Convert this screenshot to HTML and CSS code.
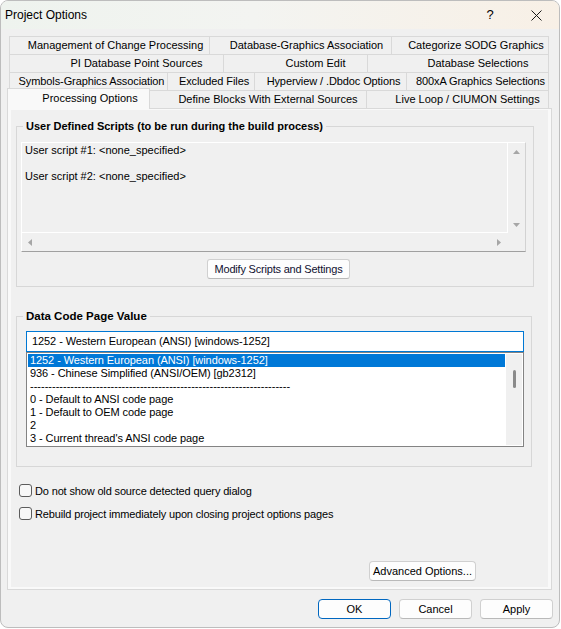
FILE: index.html
```html
<!DOCTYPE html>
<html>
<head>
<meta charset="utf-8">
<title>Project Options</title>
<link rel="stylesheet" href="styles.css">
</head>
<body>
<div class="window">
  <div class="titlebar">
    <span class="title">Project Options</span>
    <span class="cap-btn cap-help">?</span>
    <span class="cap-btn cap-close"><svg width="11" height="11" viewBox="0 0 11 11"><path d="M0.5 0.5L10.5 10.5M10.5 0.5L0.5 10.5" stroke="#1a1a1a" stroke-width="1" fill="none"/></svg></span>
  </div>
  <div class="client">
    <div class="tabs">
      <div class="tabrow row1">
        <div class="tab">Management of Change Processing</div>
        <div class="tab">Database-Graphics Association</div>
        <div class="tab">Categorize SODG Graphics</div>
      </div>
      <div class="tabrow row2">
        <div class="tab">PI Database Point Sources</div>
        <div class="tab">Custom Edit</div>
        <div class="tab">Database Selections</div>
      </div>
      <div class="tabrow row3">
        <div class="tab">Symbols-Graphics Association</div>
        <div class="tab">Excluded Files</div>
        <div class="tab">Hyperview / .Dbdoc Options</div>
        <div class="tab">800xA Graphics Selections</div>
      </div>
      <div class="tabrow row4">
        <div class="tab active">Processing Options</div>
        <div class="tab">Define Blocks With External Sources</div>
        <div class="tab">Live Loop / CIUMON Settings</div>
      </div>
    </div>
    <div class="panel">
      <div class="page">
        <fieldset class="group g1">
          <legend class="legend-tahoma">User Defined Scripts (to be run during the build process)</legend>
          <div class="scriptbox">
            <div class="script-text">
              <div class="line">User script #1: &lt;none_specified&gt;</div>
              <div class="line">&nbsp;</div>
              <div class="line">User script #2: &lt;none_specified&gt;</div>
            </div>
            <div class="vscroll">
              <svg width="7" height="4" viewBox="0 0 7 4"><polygon points="0,4 3.5,0 7,4" fill="#a6a6a6"/></svg>
              <svg width="7" height="4" viewBox="0 0 7 4"><polygon points="0,0 7,0 3.5,4" fill="#a6a6a6"/></svg>
            </div>
            <div class="hscroll">
              <svg width="4" height="7" viewBox="0 0 4 7"><polygon points="4,0 4,7 0,3.5" fill="#a6a6a6"/></svg>
              <svg width="4" height="7" viewBox="0 0 4 7"><polygon points="0,0 4,3.5 0,7" fill="#a6a6a6"/></svg>
            </div>
            <div class="corner"></div>
          </div>
          <button class="btn btn-modify">Modify Scripts and Settings</button>
        </fieldset>

        <fieldset class="group g2">
          <legend class="legend-segoe">Data Code Page Value</legend>
          <div class="combo">1252 - Western European (ANSI) [windows-1252]</div>
          <div class="list">
            <div class="items">
              <div class="item sel">1252 - Western European (ANSI) [windows-1252]</div>
              <div class="item">936 - Chinese Simplified (ANSI/OEM) [gb2312]</div>
              <div class="item dashes">-----------------------------------------------------------------------</div>
              <div class="item">0 - Default to ANSI code page</div>
              <div class="item">1 - Default to OEM code page</div>
              <div class="item">2</div>
              <div class="item">3 - Current thread's ANSI code page</div>
            </div>
            <div class="lscroll"><div class="thumb"></div></div>
          </div>
        </fieldset>

        <label class="checkrow first"><span class="check"></span><span class="checktext">Do not show old source detected query dialog</span></label>
        <label class="checkrow second"><span class="check"></span><span class="checktext">Rebuild project immediately upon closing project options pages</span></label>

        <button class="btn btn-advanced">Advanced Options...</button>
      </div>
    </div>
    <div class="footer">
      <button class="btn btn-foot btn-default">OK</button>
      <button class="btn btn-foot">Cancel</button>
      <button class="btn btn-foot">Apply</button>
    </div>
  </div>
</div>
</body>
</html>
```

FILE: styles.css
```css
* { box-sizing: border-box; }
html, body { margin: 0; padding: 0; background: #ffffff; }
body {
  width: 561px;
  height: 629px;
  overflow: hidden;
  font-family: "Liberation Sans", Arial, sans-serif;
  font-size: 11px;
  color: #000;
}
.window {
  width: 560px;
  height: 628px;
  border: 1px solid #bdbdbd;
  border-radius: 8px;
  background: #f0f0f0;
  overflow: hidden;
  display: flex;
  flex-direction: column;
}
.titlebar {
  height: 28px;
  flex: none;
  display: flex;
  align-items: center;
  background: linear-gradient(90deg, #eef3ee 0%, #f3f4f1 45%, #f8f0e6 100%);
}
.title {
  flex: 1;
  font-size: 12px;
  padding-left: 4px;
  padding-bottom: 1px;
}
.cap-btn {
  width: 46px;
  height: 28px;
  display: flex;
  align-items: center;
  justify-content: center;
}
.cap-help { font-size: 13px; padding-bottom: 1px; }

.client {
  flex: 1;
  display: flex;
  flex-direction: column;
  padding: 7px 7px 0 6px;
}

/* tabs */
.tabs { margin: 0 3px 0 2px; }
.tabrow { display: grid; height: 18px; }
.row1 { grid-template-columns: 201px 182px 157px; }
.row2 { grid-template-columns: 215px 144px 181px; }
.row3 { grid-template-columns: 159px 87px 152px 142px; }
.row4 { grid-template-columns: 141px 217px 182px; }
.tab {
  border-top: 1px solid #d9d9d9;
  border-right: 1px solid #d9d9d9;
  background: #f0f0f0;
  line-height: 17px;
  text-align: center;
  white-space: nowrap;
  overflow: hidden;
}
.tab:first-child { border-left: 1px solid #d9d9d9; }
.row1 .tab { padding-left: 12px; }
.row2 .tab { padding-left: 40px; }
.row3 .tab { padding-left: 6px; letter-spacing: -0.1px; }
.row4 .tab { padding-left: 20px; }
.row4 .tab.active {
  margin: -2px 0 -1px -2px;
  background: #f9f9f9;
  position: relative;
  z-index: 1;
  line-height: 18px;
  padding-left: 23px;
}

/* panel */
.panel {
  border: 1px solid #d9d9d9;
  background: #f9f9f9;
  padding: 1px 3px 2px 3px;
}
.page {
  background: #f0f0f0;
  padding: 10px 0 6px 0;
  display: flex;
  flex-direction: column;
  align-items: flex-start;
}

.group {
  margin: 0 0 0 5px;
  padding: 0;
  border: 1px solid #d7d7d7;
  min-width: 0;
}
.g1 { width: 518px; }
.g2 { width: 516px; margin-top: 23px; }
legend {
  margin-left: 6px;
  padding: 0 3px;
  line-height: 13px;
  font-weight: bold;
}
.legend-tahoma { font-size: 11px; }
.legend-segoe { font-size: 11.5px; }

/* scripts box */
.scriptbox {
  width: 505px;
  height: 110px;
  margin: 9px 0 0 4px;
  border-style: solid;
  border-width: 1px;
  border-color: #ffffff #d2d2d2 #a0a0a0 #ffffff;
  display: grid;
  grid-template-columns: 1fr 17px;
  grid-template-rows: 1fr 18px;
}
.script-text {
  border-right: 1px solid #ffffff;
  border-bottom: 1px solid #ffffff;
  padding: 1px 0 0 3px;
}
.line { line-height: 13px; white-space: nowrap; }
.vscroll {
  display: flex;
  flex-direction: column;
  align-items: center;
  justify-content: space-between;
  padding: 7px 0 6px 0;
}
.hscroll {
  display: flex;
  align-items: center;
  justify-content: space-between;
  padding: 0 7px 0 6px;
}
.vscroll svg, .hscroll svg { display: block; }

/* buttons */
.btn {
  font-family: "Liberation Sans", Arial, sans-serif;
  font-size: 11px;
  color: #000;
  background: #fdfdfd;
  border: 1px solid #d0d0d0;
  border-bottom-color: #b9b9b9;
  border-radius: 4px;
  padding: 0;
  height: 20px;
  line-height: 18px;
  text-align: center;
}
.btn-modify {
  width: 143px;
  margin: 7px 0 7px 190px;
  border-radius: 3px;
  color: #101030;
  letter-spacing: -0.2px;
}
.btn-advanced {
  width: 107px;
  margin: 41px 0 0 358px;
}
.btn-foot { width: 73px; }
.btn-default { border-color: #0067c0; }

/* code page */
.combo {
  width: 498px;
  height: 21px;
  margin: 8px 0 0 9px;
  border: 1px solid #0078d4;
  background: #ffffff;
  padding-left: 5px;
  line-height: 19px;
  white-space: nowrap;
  letter-spacing: -0.08px;
}
.list {
  width: 498px;
  height: 95px;
  margin: 0 0 19px 9px;
  border: 1px solid #838383;
  background: #ffffff;
  padding: 1px;
  display: grid;
  grid-template-columns: 1fr 16px;
  column-gap: 1px;
}
.items { overflow: hidden; }
.item {
  height: 13px;
  line-height: 13px;
  padding-left: 2px;
  white-space: nowrap;
  overflow: hidden;
  letter-spacing: -0.08px;
}
.item.dashes { letter-spacing: 0; }
.item.sel { background: #0078d7; color: #ffffff; }
.lscroll {
  background: #f0f0f0;
  padding-top: 16px;
}
.thumb {
  width: 3px;
  height: 18px;
  margin-left: 7px;
  background: #8a8a8a;
  border-radius: 2px;
}

/* checkboxes */
.checkrow {
  display: flex;
  align-items: center;
  gap: 3px;
  margin-left: 8px;
  height: 13px;
  white-space: nowrap;
}
.checktext { letter-spacing: -0.15px; }
.checkrow.first { margin-top: 17px; }
.checkrow.second { margin-top: 10px; }
.check {
  width: 13px;
  height: 13px;
  border: 1px solid #5c5c5c;
  border-radius: 3px;
  background: #f8f8f8;
  flex: none;
}

/* footer */
.footer {
  display: flex;
  justify-content: flex-end;
  gap: 8px;
  margin: 9px -1px 0 0;
}
```
